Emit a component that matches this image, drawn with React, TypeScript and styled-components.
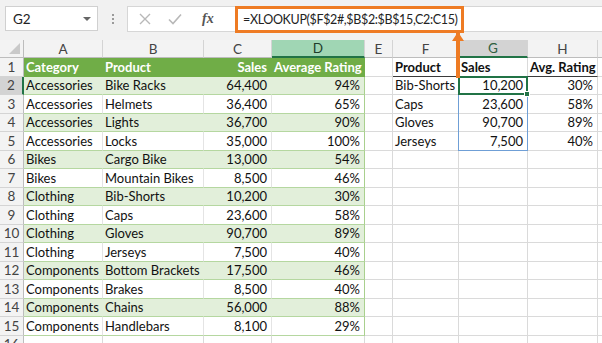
import React from "react";
import styled, { createGlobalStyle, css } from "styled-components";

const GlobalStyle = createGlobalStyle`
  html, body {
    margin: 0;
    padding: 0;
    background: #ffffff;
  }
  * {
    box-sizing: border-box;
  }
`;

const tableRows = [
  ["Accessories", "Bike Racks", "64,400", "94%"],
  ["Accessories", "Helmets", "36,400", "65%"],
  ["Accessories", "Lights", "36,700", "90%"],
  ["Accessories", "Locks", "35,000", "100%"],
  ["Bikes", "Cargo Bike", "13,000", "54%"],
  ["Bikes", "Mountain Bikes", "8,500", "46%"],
  ["Clothing", "Bib-Shorts", "10,200", "30%"],
  ["Clothing", "Caps", "23,600", "58%"],
  ["Clothing", "Gloves", "90,700", "89%"],
  ["Clothing", "Jerseys", "7,500", "40%"],
  ["Components", "Bottom Brackets", "17,500", "46%"],
  ["Components", "Brakes", "8,500", "40%"],
  ["Components", "Chains", "56,000", "88%"],
  ["Components", "Handlebars", "8,100", "29%"],
];

const lookupRows = [
  ["Bib-Shorts", "10,200", "30%"],
  ["Caps", "23,600", "58%"],
  ["Gloves", "90,700", "89%"],
  ["Jerseys", "7,500", "40%"],
];

const columns = ["A", "B", "C", "D", "E", "F", "G", "H", ""];
const gridCols = "24px 79px 101px 68px 93px 28px 66px 69px 70px 1fr";
const gridRows = "18px repeat(16, 18.5px)";

const Page = styled.div`
  position: relative;
  width: 602px;
  height: 343px;
  overflow: hidden;
  font-family: Lato, "Liberation Sans", sans-serif;
  background: #ffffff;
`;

/* ---------- formula toolbar ---------- */

const Toolbar = styled.div`
  display: flex;
  align-items: flex-start;
  height: 40px;
  padding: 6px 0 0 5px;
  background: #f1f1f1;
`;

const NameBox = styled.div`
  display: flex;
  align-items: center;
  justify-content: space-between;
  width: 93px;
  height: 25px;
  padding: 0 6px 0 7px;
  background: #ffffff;
  border: 1px solid #d0d0d0;
  font-size: 13.5px;
  color: #222;
`;

const DropCaret = styled.span`
  width: 0;
  height: 0;
  border-left: 4px solid transparent;
  border-right: 4px solid transparent;
  border-top: 4px solid #666;
`;

const Grip = styled.div`
  display: flex;
  flex-direction: column;
  gap: 2px;
  width: 29px;
  padding-top: 8px;
  align-items: center;

  span {
    width: 2px;
    height: 2px;
    background: #9a9a9a;
  }
`;

const FormulaBar = styled.div`
  display: flex;
  flex: 1;
  height: 26px;
  background: #ffffff;
  border: 1px solid #d6d6d6;
  border-right: none;
`;

const FxButtons = styled.div`
  display: flex;
  align-items: center;
  width: 103px;
  padding-left: 11px;
  gap: 17px;
`;

const FxLabel = styled.span`
  font-family: "Liberation Serif", serif;
  font-style: italic;
  font-weight: bold;
  font-size: 14px;
  color: #555;
  margin-left: 3px;
`;

const FormulaInput = styled.div`
  flex: 1;
  display: flex;
  align-items: stretch;
  padding: 0 0 0 4px;
  margin-top: -1px;
  height: 27px;
`;

const Callout = styled.div`
  display: flex;
  align-items: center;
  width: 229px;
  padding-left: 5px;
  border: 3px solid #ee7b23;
  font-size: 12.5px;
  letter-spacing: -0.35px;
  color: #222;
  white-space: nowrap;
`;

const Arrow = styled.div`
  position: absolute;
  left: 456px;
  top: 33px;
  width: 4px;
  height: 45px;
  background: #ee7b23;

  &::before {
    content: "";
    position: absolute;
    top: -1px;
    left: -4px;
    border-left: 6px solid transparent;
    border-right: 6px solid transparent;
    border-bottom: 9px solid #ee7b23;
  }
`;

/* ---------- sheet ---------- */

const SheetStack = styled.div`
  display: grid;
  > * {
    grid-area: 1 / 1;
  }
`;

const Sheet = styled.div`
  display: grid;
  grid-template-columns: ${gridCols};
  grid-template-rows: ${gridRows};
  font-size: 13px;
  color: #111;
`;

const OverlayGrid = styled(Sheet)`
  pointer-events: none;
`;

type Tone = "plain" | "head" | "band" | "white";

const Cell = styled.div<{
  $tone?: Tone;
  $right?: boolean;
  $bold?: boolean;
  $edge?: boolean;
  $underline?: boolean;
}>`
  display: flex;
  align-items: center;
  justify-content: ${(p) => (p.$right ? "flex-end" : "flex-start")};
  padding: 0 4px 0 2px;
  white-space: nowrap;
  overflow: hidden;
  border-right: 1px solid #dadada;
  border-bottom: 1px solid #dadada;
  font-weight: ${(p) => (p.$bold ? 700 : 400)};

  ${(p) =>
    p.$tone === "head" &&
    css`
      background: #70ad47;
      color: #ffffff;
      border-bottom-color: #70ad47;
      border-right-color: #70ad47;
    `}
  ${(p) =>
    p.$tone === "band" &&
    css`
      background: #e2efda;
      border-bottom-color: #b5d7a0;
      border-right-color: #e2efda;
    `}
  ${(p) =>
    p.$tone === "white" &&
    css`
      background: #ffffff;
      border-bottom-color: #b5d7a0;
      border-right-color: #e4e4e4;
    `}
  ${(p) =>
    p.$edge &&
    css`
      border-right-color: #a9d08e;
    `}
  ${(p) =>
    p.$underline &&
    css`
      border-bottom-color: #3a3a3a;
    `}
`;

const ColHead = styled.div<{ $state?: "none" | "green" | "active" }>`
  display: flex;
  align-items: center;
  justify-content: center;
  background: #f3f3f3;
  color: #444;
  font-size: 13.5px;
  border-right: 1px solid #d4d4d4;
  border-bottom: 1px solid #bdbdbd;

  ${(p) =>
    p.$state === "green" &&
    css`
      background: #a0d6b4;
      color: #1e3d2a;
      border-bottom: 2px solid #217346;
    `}
  ${(p) =>
    p.$state === "active" &&
    css`
      background: #d3d3d3;
      color: #2f5f41;
      border-bottom: 2px solid #217346;
    `}
`;

const Corner = styled.div`
  position: relative;
  background: #f3f3f3;
  border-right: 1px solid #bdbdbd;
  border-bottom: 1px solid #bdbdbd;

  &::after {
    content: "";
    position: absolute;
    right: 3px;
    bottom: 3px;
    border-left: 11px solid transparent;
    border-bottom: 11px solid #c9c9c9;
  }
`;

const RowHead = styled.div<{ $active?: boolean }>`
  display: flex;
  align-items: center;
  justify-content: center;
  background: ${(p) => (p.$active ? "#d3d3d3" : "#f3f3f3")};
  color: #444;
  font-size: 13.5px;
  border-bottom: 1px solid #d4d4d4;
  border-right: ${(p) => (p.$active ? "2px solid #217346" : "1px solid #bdbdbd")};
`;

const RangeFrame = styled.div<{ $col: number; $rows: string; $color: string; $width: number }>`
  position: relative;
  grid-column: ${(p) => p.$col};
  grid-row: ${(p) => p.$rows};
  margin: -1px 0 0 -1px;
  border: ${(p) => `${p.$width}px solid ${p.$color}`};
`;

const FillHandle = styled.span`
  position: absolute;
  right: -4px;
  bottom: -4px;
  width: 6px;
  height: 6px;
  background: #217346;
  border: 1px solid #ffffff;
`;

const CloseIcon = () => (
  <svg width="12" height="12" viewBox="0 0 12 12">
    <path d="M1 1 L11 11 M11 1 L1 11" stroke="#b8b8b8" strokeWidth="1.4" />
  </svg>
);

const CheckIcon = () => (
  <svg width="14" height="12" viewBox="0 0 14 12">
    <path d="M1 6.5 L5 10.5 L13 1.5" stroke="#b8b8b8" strokeWidth="1.6" fill="none" />
  </svg>
);

export default function App() {
  return (
    <Page>
      <GlobalStyle />
      <Toolbar>
        <NameBox>
          G2
          <DropCaret />
        </NameBox>
        <Grip>
          <span />
          <span />
          <span />
        </Grip>
        <FormulaBar>
          <FxButtons>
            <CloseIcon />
            <CheckIcon />
            <FxLabel>fx</FxLabel>
          </FxButtons>
          <FormulaInput>
            <Callout>=XLOOKUP($F$2#,$B$2:$B$15,C2:C15)</Callout>
          </FormulaInput>
        </FormulaBar>
      </Toolbar>

      <SheetStack>
        <Sheet>
          <Corner />
          {columns.map((c, i) => (
            <ColHead key={i} $state={c === "D" ? "green" : c === "G" ? "active" : "none"}>
              {c}
            </ColHead>
          ))}

          <RowHead>1</RowHead>
          <Cell $tone="head" $bold>Category</Cell>
          <Cell $tone="head" $bold>Product</Cell>
          <Cell $tone="head" $bold $right>Sales</Cell>
          <Cell $tone="head" $bold>Average Rating</Cell>
          <Cell />
          <Cell $bold $underline>Product</Cell>
          <Cell $bold $underline>Sales</Cell>
          <Cell $bold $underline>Avg. Rating</Cell>
          <Cell />

          {tableRows.map((r, i) => {
            const tone: Tone = i % 2 === 0 ? "band" : "white";
            const look = lookupRows[i];
            return (
              <React.Fragment key={i}>
                <RowHead $active={i === 0}>{i + 2}</RowHead>
                <Cell $tone={tone}>{r[0]}</Cell>
                <Cell $tone={tone}>{r[1]}</Cell>
                <Cell $tone={tone} $right>{r[2]}</Cell>
                <Cell $tone={tone} $right $edge>{r[3]}</Cell>
                <Cell />
                <Cell>{look ? look[0] : ""}</Cell>
                <Cell $right>{look ? look[1] : ""}</Cell>
                <Cell $right>{look ? look[2] : ""}</Cell>
                <Cell />
              </React.Fragment>
            );
          })}

          <RowHead>16</RowHead>
          {columns.map((_, i) => (
            <Cell key={i} />
          ))}
        </Sheet>

        <OverlayGrid>
          <RangeFrame $col={8} $rows="3 / 7" $color="#6f9fd6" $width={1} />
          <RangeFrame $col={8} $rows="3 / 4" $color="#217346" $width={2}>
            <FillHandle />
          </RangeFrame>
        </OverlayGrid>
      </SheetStack>

      <Arrow />
    </Page>
  );
}
